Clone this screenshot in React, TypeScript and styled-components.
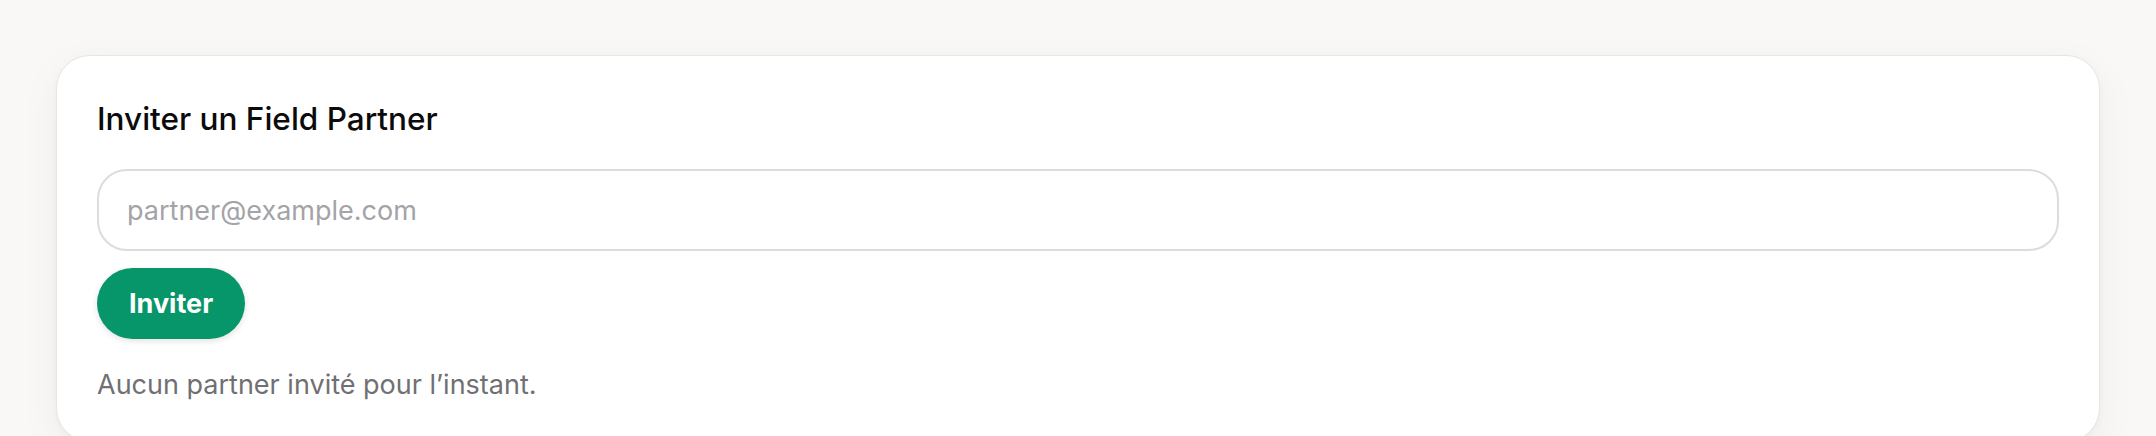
import styled, { createGlobalStyle } from "styled-components"
import { useState } from "react"

const GlobalStyle = createGlobalStyle`
    html, body {
        margin: 0;
        padding: 0;
        background: #f9f8f6;
        font-family: Inter, "Liberation Sans", sans-serif;
        -webkit-font-smoothing: antialiased;
    }
    * {
        box-sizing: border-box;
    }
`

export default function App() {
    const [email, setEmail] = useState("")
    const partners: string[] = []

    return (
        <>
            <GlobalStyle />
            <Page>
                <Card>
                    <Title>Inviter un Field Partner</Title>
                    <EmailInput
                        type="email"
                        placeholder="partner@example.com"
                        value={email}
                        onChange={(e) => setEmail(e.target.value)}
                    />
                    <InviteButton type="button">Inviter</InviteButton>
                    {partners.length === 0 && <Empty>Aucun partner invité pour l’instant.</Empty>}
                </Card>
            </Page>
        </>
    )
}

const Page = styled.div`
    padding: 55px 56px 0;
`

const Card = styled.section`
    display: flex;
    flex-direction: column;
    align-items: flex-start;
    background: #ffffff;
    border: 1px solid #e6e6e4;
    border-radius: 34px;
    padding: 43px 40px 36px;
    box-shadow: 0 12px 40px rgba(0, 0, 0, 0.05), 0 2px 6px rgba(0, 0, 0, 0.03);
`

const Title = styled.h2`
    margin: 0 0 30px;
    font-size: 31.5px;
    line-height: 40px;
    font-weight: 450;
    color: #0b0b0c;
`

const EmailInput = styled.input`
    width: 100%;
    height: 82px;
    padding: 0 28px;
    border: 2px solid #dcdcdc;
    border-radius: 30px;
    font-family: inherit;
    font-size: 27px;
    color: #111;
    background: #fff;
    outline: none;
    &::placeholder {
        color: #a3a3a8;
    }
`

const InviteButton = styled.button`
    margin-top: 17px;
    height: 71px;
    padding: 0 32px;
    border: none;
    border-radius: 36px;
    background: #07966a;
    color: #ffffff;
    font-family: inherit;
    font-size: 27px;
    font-weight: 700;
    cursor: pointer;
    box-shadow: 0 2px 6px rgba(0, 0, 0, 0.12);
`

const Empty = styled.p`
    margin: 26px 0 0;
    font-size: 27px;
    line-height: 40px;
    color: #707074;
`
